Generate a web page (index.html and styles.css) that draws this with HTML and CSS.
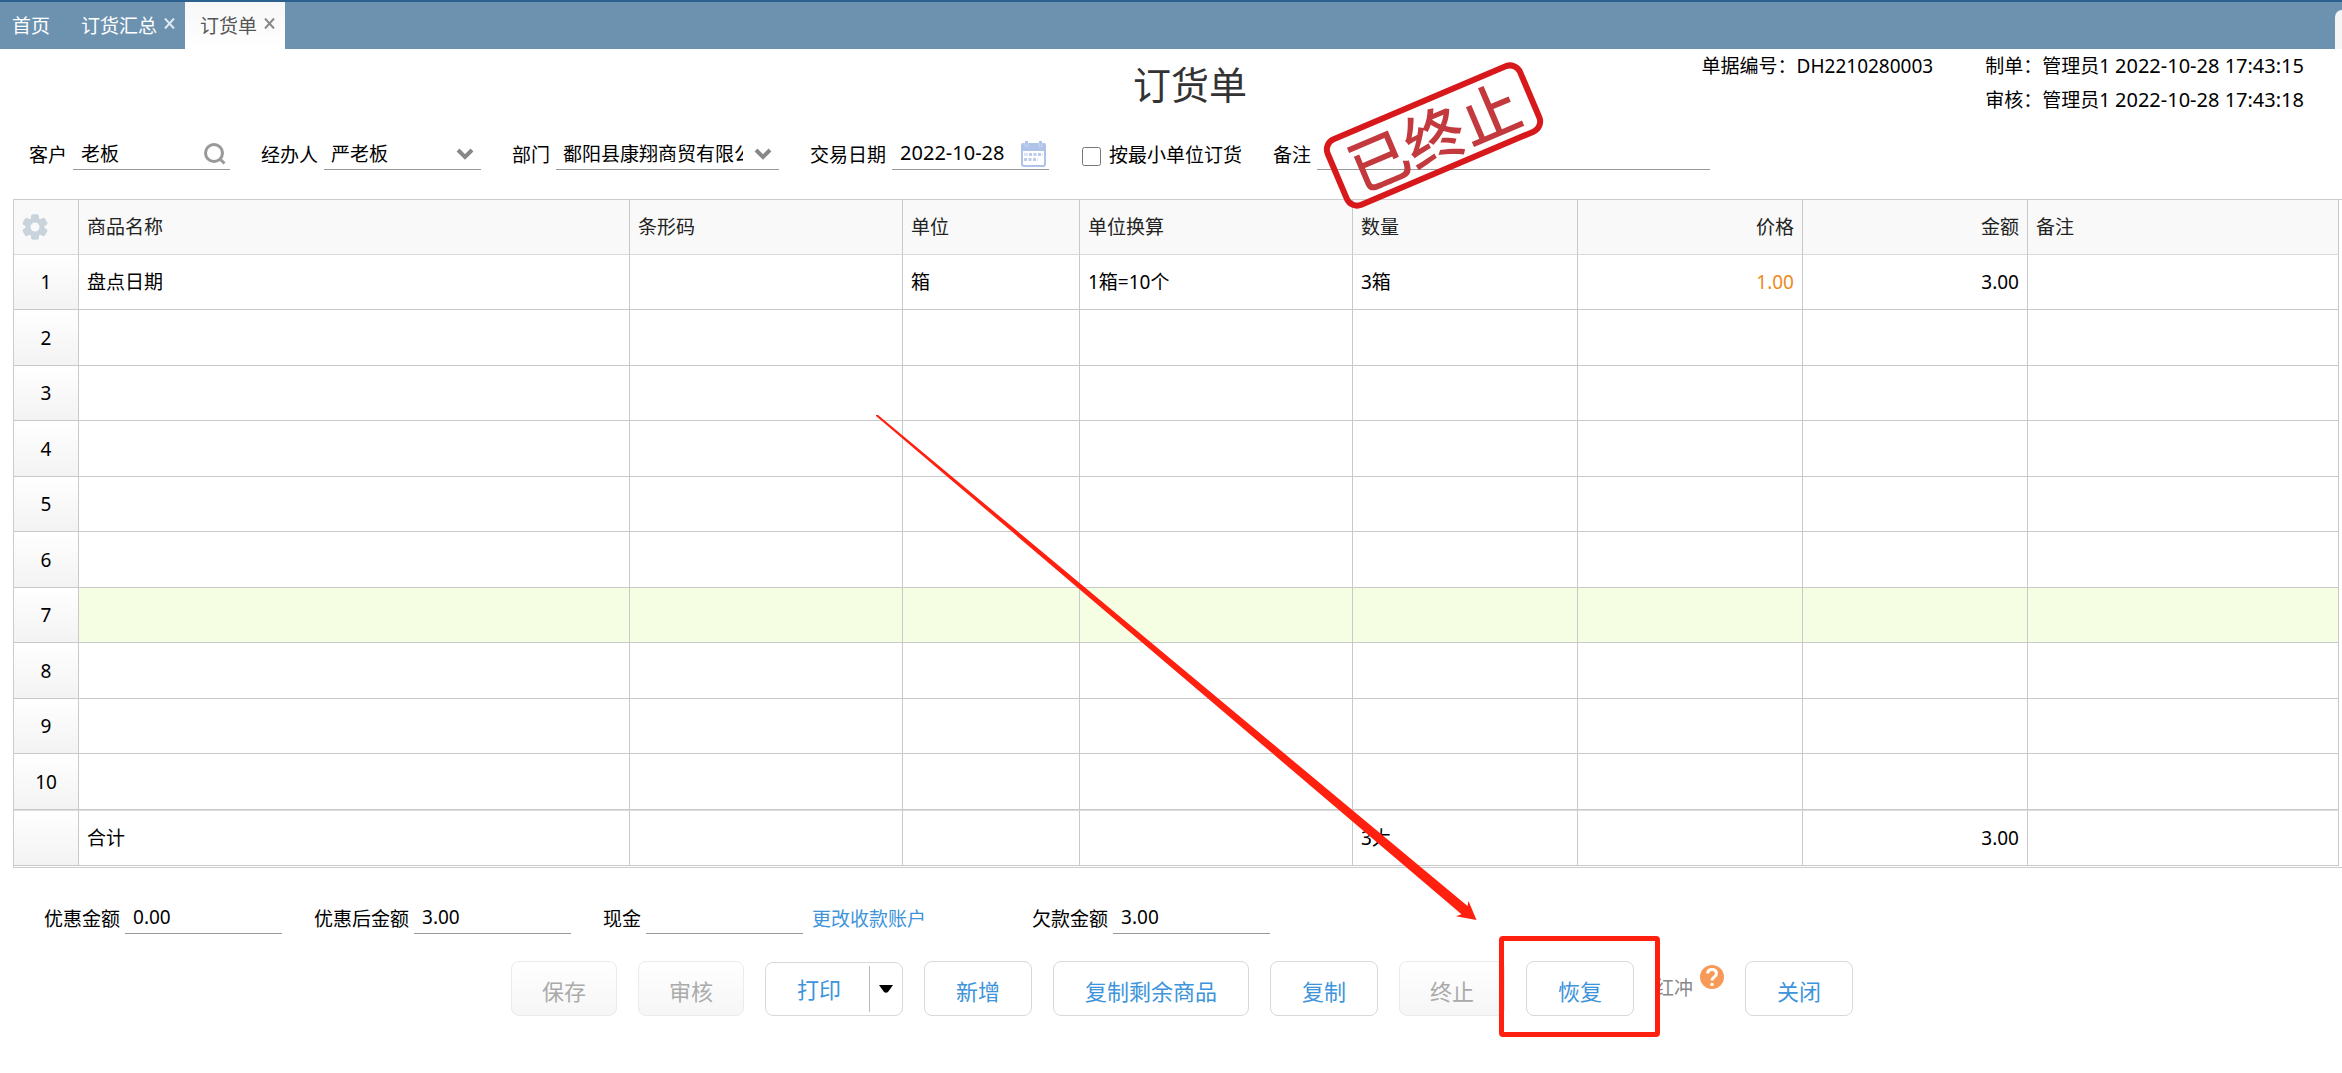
FILE: index.html
```html
<!DOCTYPE html>
<html lang="zh-CN">
<head>
<meta charset="utf-8">
<title>订货单</title>
<link rel="stylesheet" href="styles.css">
</head>
<body>
<nav class="tabs">
  <a class="tab tab-home" href="#">首页</a>
  <div class="tab"><a href="#">订货汇总</a><button class="tab-close" type="button" aria-label="关闭订货汇总"><svg width="11" height="11" viewBox="0 0 11 11"><path d="M1 0.5 10 10.5M10 0.5 1 10.5"/></svg></button></div>
  <div class="tab tab-active"><a href="#">订货单</a><button class="tab-close" type="button" aria-label="关闭订货单"><svg width="11" height="11" viewBox="0 0 11 11"><path d="M1 0.5 10 10.5M10 0.5 1 10.5"/></svg></button></div>
  <span class="tabs-handle"></span>
</nav>

<main>
  <header class="doc-head">
    <h1 class="doc-title">订货单</h1>
    <div class="doc-meta">
      <div>单据编号：DH2210280003</div>
      <div>
        <div>制单：管理员1 <span class="time">2022-10-28 17:43:15</span></div>
        <div>审核：管理员1 <span class="time">2022-10-28 17:43:18</span></div>
      </div>
    </div>
  </header>

  <form class="fields fields-top">
    <div class="field">
      <label for="customer">客户</label>
      <div class="box">
        <input id="customer" type="text" value="老板">
        <svg class="box-icon search" width="22" height="22" viewBox="0 0 22 22"><circle cx="10" cy="10" r="8.5"/><path d="m15.500 15.500 5 5"/></svg>
      </div>
    </div>
    <div class="field">
      <label for="agent">经办人</label>
      <div class="box">
        <select id="agent"><option>严老板</option></select>
        <svg class="box-icon chevron" width="18" height="12" viewBox="0 0 18 12"><path d="m2 2 7 7 7-7"/></svg>
      </div>
    </div>
    <div class="field">
      <label for="dept">部门</label>
      <div class="box box-wide">
        <select id="dept"><option>鄱阳县康翔商贸有限公司</option></select>
        <svg class="box-icon chevron" width="18" height="12" viewBox="0 0 18 12"><path d="m2 2 7 7 7-7"/></svg>
      </div>
    </div>
    <div class="field">
      <label for="date">交易日期</label>
      <div class="box">
        <input id="date" class="date" type="text" value="2022-10-28">
        <svg class="box-icon calendar" width="25" height="26" viewBox="0 0 25 26">
          <rect x="1" y="4" width="23" height="21" rx="2" fill="#fff" stroke="#afc3e8" stroke-width="2"/>
          <path d="M0 10V4q0-2 2-2h2V0h3v2h11V0h3v2h2q2 0 2 2v6z" fill="#afc3e8"/>
          <path d="M4 2v3q1.500 2 3 0V2M18 2v3q1.500 2 3 0V2" fill="none" stroke="#c9d7f0"/>
          <path d="M8 13.500h14M3 18.500h14" stroke="#bccdeb" stroke-width="3" stroke-dasharray="3 1.500"/>
          <path d="M3 13.500h4" stroke="#dbe5f6" stroke-width="3"/>
        </svg>
      </div>
    </div>
    <label class="check"><input type="checkbox">按最小单位订货</label>
    <div class="field field-remark">
      <label for="remark">备注</label>
      <div class="box box-remark"><input id="remark" type="text"></div>
      <div class="stamp">已终止</div>
    </div>
  </form>

  <div class="grid-wrap">
    <table class="grid">
      <colgroup><col class="c-no"><col class="c-name"><col class="c-code"><col class="c-unit"><col class="c-code"><col class="c-num"><col class="c-num"><col class="c-num"><col></colgroup>
      <thead>
        <tr>
          <th><button class="gear" type="button" aria-label="设置"><svg width="26" height="26" viewBox="0 0 26 26"><g transform="translate(13 13)"><g fill="#c8d3dc"><circle r="9.500"/><rect x="-4" y="-12.800" width="8" height="25.600" rx="2"/><rect x="-4" y="-12.800" width="8" height="25.600" rx="2" transform="rotate(60)"/><rect x="-4" y="-12.800" width="8" height="25.600" rx="2" transform="rotate(120)"/></g><circle r="4.500" fill="#f9f9f9"/></g></svg></button></th>
          <th>商品名称</th><th>条形码</th><th>单位</th><th>单位换算</th><th>数量</th><th class="r">价格</th><th class="r">金额</th><th>备注</th>
        </tr>
      </thead>
      <tbody>
        <tr><th>1</th><td>盘点日期</td><td></td><td>箱</td><td>1箱=10个</td><td>3箱</td><td class="r price">1.00</td><td class="r">3.00</td><td></td></tr>
        <tr><th>2</th><td></td><td></td><td></td><td></td><td></td><td></td><td></td><td></td></tr>
        <tr><th>3</th><td></td><td></td><td></td><td></td><td></td><td></td><td></td><td></td></tr>
        <tr><th>4</th><td></td><td></td><td></td><td></td><td></td><td></td><td></td><td></td></tr>
        <tr><th>5</th><td></td><td></td><td></td><td></td><td></td><td></td><td></td><td></td></tr>
        <tr><th>6</th><td></td><td></td><td></td><td></td><td></td><td></td><td></td><td></td></tr>
        <tr class="hover"><th>7</th><td></td><td></td><td></td><td></td><td></td><td></td><td></td><td></td></tr>
        <tr><th>8</th><td></td><td></td><td></td><td></td><td></td><td></td><td></td><td></td></tr>
        <tr><th>9</th><td></td><td></td><td></td><td></td><td></td><td></td><td></td><td></td></tr>
        <tr><th>10</th><td></td><td></td><td></td><td></td><td></td><td></td><td></td><td></td></tr>
      </tbody>
      <tfoot>
        <tr><th></th><td>合计</td><td></td><td></td><td></td><td>3大</td><td></td><td class="r">3.00</td><td></td></tr>
      </tfoot>
    </table>
  </div>

  <form class="fields fields-bottom">
    <div class="field"><label for="discount">优惠金额</label><div class="box"><input id="discount" type="text" value="0.00"></div></div>
    <div class="field"><label for="after">优惠后金额</label><div class="box"><input id="after" type="text" value="3.00"></div></div>
    <div class="field"><label for="cash">现金</label><div class="box"><input id="cash" type="text"></div><a class="account" href="#">更改收款账户</a></div>
    <div class="field field-debt"><label for="debt">欠款金额</label><div class="box"><input id="debt" type="text" value="3.00"></div></div>
  </form>

  <div class="actions">
    <button class="btn" type="button" disabled>保存</button>
    <button class="btn" type="button" disabled>审核</button>
    <div class="split">
      <button class="split-main" type="button">打印</button>
      <button class="split-more" type="button" aria-label="更多打印选项"><svg width="14" height="8" viewBox="0 0 14 8"><path d="M0 0h14L9 7q-2 1.500-4 0z"/></svg></button>
    </div>
    <button class="btn" type="button">新增</button>
    <button class="btn" type="button">复制剩余商品</button>
    <button class="btn" type="button">复制</button>
    <button class="btn" type="button" disabled>终止</button>
    <div class="marked"><button class="btn" type="button">恢复</button></div>
    <div class="reverse">
      <span>红冲</span>
      <svg width="24" height="24" viewBox="0 0 24 24"><circle cx="12" cy="12" r="12" fill="#f79a58"/><path d="M7.500 8.500q.5-4 4.500-4t4.500 3.800q0 2.200-2.200 3.700T12 15.500" fill="none" stroke="#fff" stroke-width="3"/><circle cx="12" cy="19.500" r="1.800" fill="#fff"/></svg>
    </div>
    <button class="btn" type="button">关闭</button>
  </div>
</main>

<svg class="arrow" width="602" height="506" viewBox="0 0 602 506"><path d="M0 0h2L591.500 491l1-5 8 19-20.500-3.700 5.500-2L0 1z"/></svg>
</body>
</html>
```
FILE: styles.css
```css
* { box-sizing: border-box; }

body {
  position: relative;
  margin: 0;
  background: #fff;
  color: #000;
  font: 19px/28px "Noto Sans", "Noto Sans CJK SC", sans-serif;
}

a { text-decoration: none; color: inherit; }
input, select, button { font: inherit; color: inherit; }
button { padding: 0; border: 0; background: none; }

/* Tabs */
.tabs {
  display: flex;
  height: 49px;
  border-top: 2px solid #2c618f;
  background: #6d92b0;
  color: #fff;
}
.tab {
  display: flex;
  align-items: center;
  gap: 7px;
  padding: 0 10px 0 15px;
}
.tab-home { padding: 0 16px 0 12px; }
.tab-active {
  background: linear-gradient(#f7f7f7, #fff);
  color: #555;
}
.tab-close { height: 11px; line-height: 0; margin-bottom: 5px; }
.tab-close svg { stroke: #dfe8ef; stroke-width: 2; }
.tab-active .tab-close svg { stroke: #888; }
.tabs-handle {
  width: 7px;
  height: 39px;
  margin: auto 0 0 auto;
  border-radius: 7px 0 0 0;
  background: #f5f5f5;
}

/* Document heading */
.doc-head {
  display: grid;
  grid-template-columns: 1fr auto 1fr;
  height: 72px;
  padding: 0 38px 0 76px;
}
.doc-title {
  grid-column: 2;
  margin: 0;
  color: #333;
  font-size: 38px;
  font-weight: 400;
  line-height: 70px;
}
.doc-meta {
  display: flex;
  justify-content: flex-end;
  gap: 52px;
  line-height: 34px;
  white-space: nowrap;
}
.time { font-size: 20px; }

/* Form fields */
.fields { display: flex; gap: 32px; white-space: nowrap; }
.fields-top { gap: 31px; padding: 19px 29px 29px; }
.fields-top .field { gap: 6px; }
.fields-bottom { padding: 36px 44px 27px; }
.field { display: flex; align-items: center; gap: 5px; }
.box { position: relative; width: 157px; }
.box-wide { width: 223px; }
.box-remark { width: 393px; }
.box input, .box select {
  display: block;
  width: 100%;
  height: 30px;
  padding: 0 0 4px 8px;
  border: 0;
  border-bottom: 1px solid #999;
  border-radius: 0;
  background: transparent;
  outline: 0;
  appearance: none;
}
.box select { padding: 0 36px 4px 7px; }
.box .date { font-size: 20px; }
.box-icon { position: absolute; pointer-events: none; fill: none; }
.search { right: 4px; top: 3px; stroke: #999; stroke-width: 3; }
.chevron { right: 7px; top: 8px; stroke: #888; stroke-width: 4; }
.calendar { right: 3px; top: 1px; }
.check { display: flex; align-items: center; gap: 8px; margin-left: 2px; }
.check input { width: 19px; height: 19px; margin: 3px 0 0; }
.field-remark { position: relative; }
.account { margin-left: 4px; color: #3d94db; }
.field-debt { margin-left: 74px; }

.stamp {
  position: absolute;
  left: 53px;
  top: -43px;
  width: 215px;
  height: 77px;
  border: 6px solid #d8191c;
  border-radius: 14px;
  color: #c23a3d;
  font: 500 60px/62px "Noto Sans CJK SC", sans-serif;
  text-align: center;
  transform: rotate(-23deg);
}

/* Goods table */
.grid-wrap {
  margin-left: 13px;
  padding-bottom: 1px;
  border: 1px solid #ccc;
  border-right: 0;
  overflow-x: auto;
}
.grid {
  width: calc(100% - 3px);
  min-width: 2100px;
  table-layout: fixed;
  border-collapse: separate;
  border-spacing: 0;
}
.c-no { width: 65px; }
.c-name { width: 551px; }
.c-code { width: 273px; }
.c-unit { width: 177px; }
.c-num { width: 225px; }
.grid th, .grid td {
  height: 55px;
  padding: 0 8px;
  border-right: 1px solid #c9c9c9;
  border-bottom: 1px solid #c9c9c9;
  font-weight: 400;
  text-align: left;
}
.grid thead th { border-bottom-color: #d9d9d9; background: #f9f9f9; color: #222; }
.grid tbody th, .grid tfoot th {
  background: linear-gradient(#fff, #f3f3f3);
  text-align: center;
}
.grid tbody tr:nth-child(even) > * { height: 56px; }
.grid tfoot tr > * { height: 56px; border-top: 1px solid #ddd; }
.grid .hover td { background: #f5fee2; }
.grid .r { text-align: right; }
.grid .price { color: #ec8a1c; }
.gear { display: block; line-height: 0; }

/* Action buttons */
.actions {
  display: flex;
  justify-content: center;
  align-items: center;
  gap: 21px;
  padding: 0 0 56px 22px;
  font-size: 22px;
  white-space: nowrap;
}
.btn {
  height: 55px;
  padding: 5px 31px 0;
  border: 1px solid #d9d9d9;
  border-radius: 8px;
  background: #fff;
  color: #3d94db;
}
.btn:disabled {
  padding: 5px 30px 0;
  border-color: #ebebeb;
  background: linear-gradient(#fff, #f6f6f6);
  color: #aaa;
}
.split {
  display: flex;
  align-items: center;
  height: 54px;
  border: 1px solid #d9d9d9;
  border-radius: 8px;
}
.split-main {
  height: 46px;
  padding: 0 28px 0 31px;
  border-right: 1px solid #bbb;
  color: #3d94db;
}
.split-more { width: 32px; height: 46px; line-height: 0; }
.marked { position: relative; }
.marked::after {
  content: "";
  position: absolute;
  inset: -25px -26px -21px -27px;
  border: 5px solid #ff2010;
  border-radius: 4px;
  pointer-events: none;
}
.reverse {
  display: flex;
  gap: 7px;
  height: 48px;
  color: #888;
  font-size: 19px;
  line-height: 46px;
}

/* Pointer from the table to the restore button */
.arrow {
  position: absolute;
  left: 876px;
  top: 415px;
  fill: #ff2010;
  pointer-events: none;
}
```
